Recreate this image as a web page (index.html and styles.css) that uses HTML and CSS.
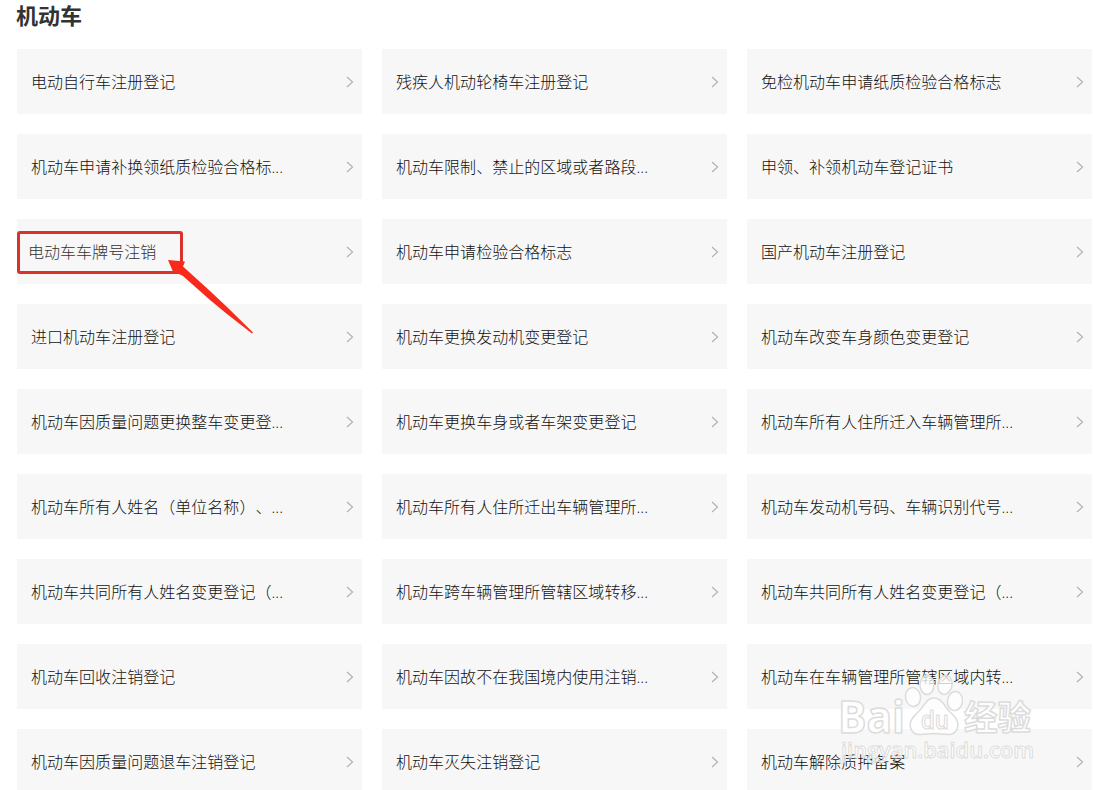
FILE: index.html
```
<!DOCTYPE html>
<html lang="zh-CN">

<head>
  <meta charset="UTF-8">
  <title>机动车</title>
  <link rel="stylesheet" href="styles.css">
</head>

<body>
  <svg width="0" height="0" class="defs">
    <symbol id="arrow" viewBox="0 0 8 12">
      <path d="M1 1 L6.600 6 L1 11" />
    </symbol>
  </svg>
  <h1>机动车</h1>
  <div class="list">
    <div class="item"><span>电动自行车注册登记</span><svg class="arrow"><use href="#arrow" /></svg></div>
    <div class="item"><span>残疾人机动轮椅车注册登记</span><svg class="arrow"><use href="#arrow" /></svg></div>
    <div class="item"><span>免检机动车申请纸质检验合格标志</span><svg class="arrow"><use href="#arrow" /></svg></div>
    <div class="item"><span>机动车申请补换领纸质检验合格标...</span><svg class="arrow"><use href="#arrow" /></svg></div>
    <div class="item"><span>机动车限制、禁止的区域或者路段...</span><svg class="arrow"><use href="#arrow" /></svg></div>
    <div class="item"><span>申领、补领机动车登记证书</span><svg class="arrow"><use href="#arrow" /></svg></div>
    <div class="item marked"><span>电动车车牌号注销</span><svg class="arrow"><use href="#arrow" /></svg>
      <div class="frame"></div>
      <svg class="pointer" width="90" height="80" viewBox="0 0 90 80">
        <path d="M2 3 L19 4.500 L17 9.500 L44 34 L61 50 L87 75.500 L86 76.500 L61 57 L44 43 L17 19 L13 17 L8 17 Z" />
      </svg>
    </div>
    <div class="item"><span>机动车申请检验合格标志</span><svg class="arrow"><use href="#arrow" /></svg></div>
    <div class="item"><span>国产机动车注册登记</span><svg class="arrow"><use href="#arrow" /></svg></div>
    <div class="item"><span>进口机动车注册登记</span><svg class="arrow"><use href="#arrow" /></svg></div>
    <div class="item"><span>机动车更换发动机变更登记</span><svg class="arrow"><use href="#arrow" /></svg></div>
    <div class="item"><span>机动车改变车身颜色变更登记</span><svg class="arrow"><use href="#arrow" /></svg></div>
    <div class="item"><span>机动车因质量问题更换整车变更登...</span><svg class="arrow"><use href="#arrow" /></svg></div>
    <div class="item"><span>机动车更换车身或者车架变更登记</span><svg class="arrow"><use href="#arrow" /></svg></div>
    <div class="item"><span>机动车所有人住所迁入车辆管理所...</span><svg class="arrow"><use href="#arrow" /></svg></div>
    <div class="item"><span>机动车所有人姓名（单位名称）、...</span><svg class="arrow"><use href="#arrow" /></svg></div>
    <div class="item"><span>机动车所有人住所迁出车辆管理所...</span><svg class="arrow"><use href="#arrow" /></svg></div>
    <div class="item"><span>机动车发动机号码、车辆识别代号...</span><svg class="arrow"><use href="#arrow" /></svg></div>
    <div class="item"><span>机动车共同所有人姓名变更登记（...</span><svg class="arrow"><use href="#arrow" /></svg></div>
    <div class="item"><span>机动车跨车辆管理所管辖区域转移...</span><svg class="arrow"><use href="#arrow" /></svg></div>
    <div class="item"><span>机动车共同所有人姓名变更登记（...</span><svg class="arrow"><use href="#arrow" /></svg></div>
    <div class="item"><span>机动车回收注销登记</span><svg class="arrow"><use href="#arrow" /></svg></div>
    <div class="item"><span>机动车因故不在我国境内使用注销...</span><svg class="arrow"><use href="#arrow" /></svg></div>
    <div class="item"><span>机动车在车辆管理所管辖区域内转...</span><svg class="arrow"><use href="#arrow" /></svg></div>
    <div class="item"><span>机动车因质量问题退车注销登记</span><svg class="arrow"><use href="#arrow" /></svg></div>
    <div class="item"><span>机动车灭失注销登记</span><svg class="arrow"><use href="#arrow" /></svg></div>
    <div class="item"><span>机动车解除质押备案</span><svg class="arrow"><use href="#arrow" /></svg></div>
  </div>

  <svg class="watermark" width="210" height="100" viewBox="0 0 210 100">
    <text class="bai" x="8" y="61" textLength="67" lengthAdjust="spacingAndGlyphs">Bai</text>
    <ellipse cx="83" cy="25" rx="7.500" ry="9.500" transform="rotate(-10 83 25)" />
    <ellipse cx="97" cy="13" rx="7" ry="9.500" />
    <ellipse cx="115" cy="13" rx="7" ry="9.500" transform="rotate(12 115 13)" />
    <ellipse cx="125" cy="29" rx="7.500" ry="9.500" transform="rotate(8 125 29)" />
    <path d="M104 26 C112 26 114 34 120 40 C127 46 130 51 127 57 C124 65 116 62 104 61.500 C92 62 84 65 81 57 C78 50 83 45 89 39 C95 34 96 26 104 26 Z" />
    <text class="du" x="91" y="57" textLength="28" lengthAdjust="spacingAndGlyphs">du</text>
    <text class="jy" x="134" y="58" textLength="67" lengthAdjust="spacingAndGlyphs">经验</text>
    <text class="url" x="11" y="86" textLength="193" lengthAdjust="spacingAndGlyphs">jingyan.baidu.com</text>
  </svg>
</body>

</html>
```

FILE: styles.css
```
body {
  margin: 0;
  height: 790px;
  overflow: hidden;
  position: relative;
  background-color: #fff;
  color: #333;
  font-family: "Open Sans", "Noto Sans CJK SC", sans-serif;
  text-spacing-trim: space-all;
}

.defs {
  position: absolute;
}

h1 {
  margin: 0;
  padding-left: 16px;
  height: 49px;
  line-height: 30px;
  font-size: 22px;
  font-weight: bold;
}

.list {
  display: grid;
  grid-template-columns: repeat(3, 345px);
  grid-auto-rows: 65px;
  gap: 20px;
  padding-left: 17px;
}

.item {
  display: flex;
  align-items: center;
  justify-content: space-between;
  box-sizing: border-box;
  padding: 0 8px 0 14px;
  background-color: #f7f7f7;
  color: #111;
  font-size: 16px;
  font-weight: 300;
  letter-spacing: 0.03px;
  line-height: 24px;
  white-space: nowrap;
}

.arrow {
  width: 8px;
  height: 12px;
  fill: none;
  stroke: #b0b0b0;
  stroke-width: 1.1;
}

.marked {
  position: relative;
  padding-left: 11px;
  color: #333;
}

.frame {
  position: absolute;
  left: 0;
  top: 12px;
  width: 166px;
  height: 43px;
  box-sizing: border-box;
  border: 3px solid #d9322a;
  border-radius: 3px;
}

.pointer {
  position: absolute;
  left: 149px;
  top: 38px;
  fill: #f82a1b;
}

.watermark {
  position: absolute;
  left: 830px;
  top: 672px;
  fill: #fff;
  fill-opacity: 0.75;
  stroke: #dcdcdc;
  stroke-width: 1.5;
  stroke-linejoin: round;
}

.bai {
  font-family: "Open Sans", sans-serif;
  font-size: 45px;
  font-weight: bold;
}

.du {
  font-family: "Open Sans", sans-serif;
  font-size: 25px;
  font-weight: 600;
  stroke-width: 1.2;
}

.jy {
  font-family: "Noto Sans CJK SC", sans-serif;
  font-size: 34px;
  font-weight: bold;
}

.url {
  font-family: "Open Sans", sans-serif;
  font-size: 21px;
  font-weight: 600;
  stroke-width: 0.9;
}
```
